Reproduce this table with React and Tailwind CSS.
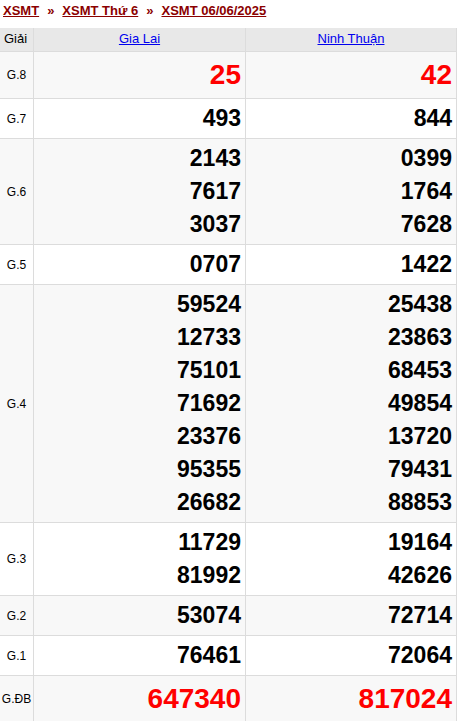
import React from "react";

const rows = [
  { label: "G.8", a: ["25"], b: ["42"], special: true, bg: "bg-[#f8f8f8]" },
  { label: "G.7", a: ["493"], b: ["844"], bg: "bg-white" },
  { label: "G.6", a: ["2143", "7617", "3037"], b: ["0399", "1764", "7628"], bg: "bg-[#f8f8f8]" },
  { label: "G.5", a: ["0707"], b: ["1422"], bg: "bg-white" },
  {
    label: "G.4",
    a: ["59524", "12733", "75101", "71692", "23376", "95355", "26682"],
    b: ["25438", "23863", "68453", "49854", "13720", "79431", "88853"],
    bg: "bg-[#f8f8f8]",
  },
  { label: "G.3", a: ["11729", "81992"], b: ["19164", "42626"], bg: "bg-white" },
  { label: "G.2", a: ["53074"], b: ["72714"], bg: "bg-[#f8f8f8]" },
  { label: "G.1", a: ["76461"], b: ["72064"], bg: "bg-white" },
  { label: "G.ĐB", a: ["647340"], b: ["817024"], special: true, bg: "bg-[#f8f8f8]" },
];

function Nums({ list, special }) {
  return (
    <div className="flex flex-col items-end py-[3px] pr-[4px]">
      {list.map((n, i) =>
        special ? (
          <span key={i} className="text-[28px] leading-[40px] font-bold text-[#ff0000]">
            {n}
          </span>
        ) : (
          <span key={i} className="text-[23px] leading-[33px] font-bold text-black">
            {n}
          </span>
        )
      )}
    </div>
  );
}

export default function App() {
  return (
    <div className="w-[458px] bg-white font-['Liberation_Sans',Arial,sans-serif]">
      <div className="h-[28px] pl-[3px] text-[13px] leading-[22px] font-bold text-[#8b0000] whitespace-nowrap">
        <span className="underline">XSMT</span>
        <span className="mx-[8px]">»</span>
        <span className="underline">XSMT Thứ 6</span>
        <span className="mx-[8px]">»</span>
        <span className="underline">XSMT 06/06/2025</span>
      </div>
      <div className="w-[457px] border-r border-[#dcdcdc]">
        <div className="flex border-b border-[#dcdcdc] bg-[#e8e8e8] h-[24px] text-[13px] leading-[22px]">
          <div className="w-[34px] shrink-0 border-r border-[#dcdcdc] pl-[4px] text-black">Giải</div>
          <div className="w-[212px] shrink-0 border-r border-[#dcdcdc] text-center">
            <span className="text-[#0000ee] underline">Gia Lai</span>
          </div>
          <div className="flex-1 text-center">
            <span className="text-[#0000ee] underline">Ninh Thuận</span>
          </div>
        </div>
        {rows.map((r) => (
          <div key={r.label} className={`flex border-b border-[#dcdcdc] ${r.bg}`}>
            <div className="w-[34px] shrink-0 border-r border-[#dcdcdc] flex items-center justify-center text-[12px] text-black whitespace-nowrap overflow-visible">
              {r.label}
            </div>
            <div className="w-[212px] shrink-0 border-r border-[#dcdcdc]">
              <Nums list={r.a} special={r.special} />
            </div>
            <div className="flex-1">
              <Nums list={r.b} special={r.special} />
            </div>
          </div>
        ))}
      </div>
    </div>
  );
}
